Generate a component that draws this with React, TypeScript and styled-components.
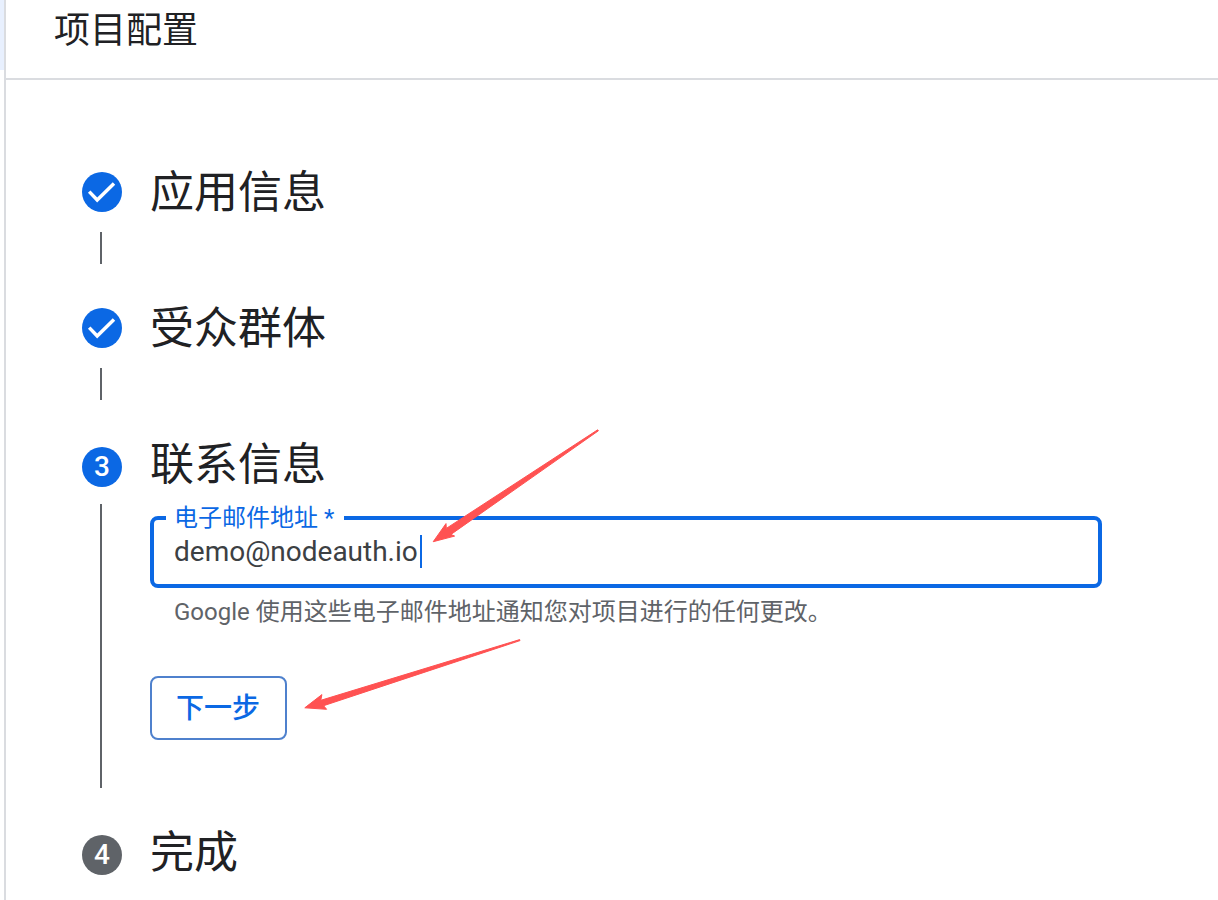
import React, { useState } from "react";
import styled, { createGlobalStyle } from "styled-components";

const GlobalStyle = createGlobalStyle`
  *, *::before, *::after { box-sizing: border-box; }
  body {
    margin: 0;
    background: #ffffff;
    color: #202124;
    font-family: Roboto, "Noto Sans CJK SC", sans-serif;
  }
`;

const Page = styled.div`
  display: flex;
  min-height: 100vh;
`;

const NavRail = styled.nav`
  flex: none;
  width: 6px;
  border-right: 2px solid #dadce0;
`;

const ActiveNavItem = styled.div`
  height: 70px;
  background: #e8f0fe;
`;

const Main = styled.main`
  flex: 1;
  min-width: 0;
`;

const Header = styled.header`
  display: flex;
  height: 80px;
  padding: 9px 48px 0;
  border-bottom: 2px solid #dadce0;
`;

const Title = styled.h1`
  margin: 0;
  font-size: 36px;
  line-height: 44px;
  font-weight: 400;
`;

const Stepper = styled.ol`
  margin: 0;
  padding: 92px 116px 0 76px;
  list-style: none;
`;

const Step = styled.li`
  display: grid;
  grid-template-columns: 40px minmax(0, 1fr);
  grid-template-rows: 40px auto;
  column-gap: 28px;
`;

const Marker = styled.span<{ $tone: "blue" | "grey"; $numbered?: boolean }>`
  display: flex;
  align-items: center;
  justify-content: center;
  width: 40px;
  height: 40px;
  margin-top: ${(p) => (p.$numbered ? "3px" : "0")};
  border-radius: 50%;
  background: ${(p) => (p.$tone === "blue" ? "#0b68e4" : "#5f6368")};
  color: #ffffff;
  font-size: 28px;
  line-height: 40px;
  font-weight: 500;
`;

const StepTitle = styled.h2`
  margin: 0;
  font-size: 44px;
  line-height: 42px;
  font-weight: 400;
`;

const Connector = styled.span`
  width: 2px;
  min-height: 32px;
  margin: 20px 0 44px 18px;
  background: #5f6368;
`;

const StepBody = styled.form`
  position: relative;
  padding: 22px 0 92px;
`;

const Field = styled.fieldset`
  position: relative;
  min-width: 0;
  margin: 0;
  padding: 0 20px 12px 12px;
  border: 4px solid #0b68e4;
  border-radius: 8px;
`;

const Legend = styled.legend`
  height: 24px;
  padding: 0 10px 0 8px;
  color: #0b68e4;
  font-size: 24px;
  line-height: 24px;
`;

const EmailInput = styled.input`
  display: block;
  width: 100%;
  height: 42px;
  padding: 0 8px;
  border: 0;
  outline: 0;
  background: transparent;
  color: #3c4043;
  caret-color: transparent;
  font-family: inherit;
  font-size: 28px;
  line-height: 36px;
`;

const Caret = styled.span`
  position: absolute;
  top: 5px;
  left: 266px;
  width: 2px;
  height: 33px;
  background: #0b68e4;
`;

const Hint = styled.p`
  margin: 8px 24px 0;
  color: #5f6368;
  font-size: 24px;
  line-height: 32px;
`;

const NextButton = styled.button`
  display: block;
  height: 64px;
  margin-top: 48px;
  padding: 2px 25px 0 24px;
  border: 2px solid #4f81cd;
  border-radius: 8px;
  background: #ffffff;
  color: #0b68e4;
  font-family: inherit;
  font-size: 28px;
  line-height: 36px;
  font-weight: 500;
`;

const Arrow = styled.svg<{ $top: number; $left: number }>`
  position: absolute;
  top: ${(p) => p.$top}px;
  left: ${(p) => p.$left}px;
  fill: #ff5252;
  stroke: #ff5252;
  stroke-linejoin: round;
  pointer-events: none;
`;

function Check() {
  return (
    <svg width="40" height="40" viewBox="0 0 40 40" aria-hidden="true">
      <path d="M7.2 19.6 L15.2 27.9 L32 11.4" fill="none" stroke="#ffffff" strokeWidth="3.5" />
    </svg>
  );
}

export default function App() {
  const [email, setEmail] = useState("demo@nodeauth.io");

  return (
    <Page>
      <GlobalStyle />
      <NavRail>
        <ActiveNavItem />
      </NavRail>
      <Main>
        <Header>
          <Title>项目配置</Title>
        </Header>
        <Stepper>
          <Step>
            <Marker $tone="blue">
              <Check />
            </Marker>
            <StepTitle>应用信息</StepTitle>
            <Connector />
          </Step>
          <Step>
            <Marker $tone="blue">
              <Check />
            </Marker>
            <StepTitle>受众群体</StepTitle>
            <Connector />
          </Step>
          <Step>
            <Marker $tone="blue" $numbered>
              3
            </Marker>
            <StepTitle>联系信息</StepTitle>
            <Connector />
            <StepBody onSubmit={(e) => e.preventDefault()}>
              <Field>
                <Legend>
                  <label htmlFor="email">电子邮件地址 *</label>
                </Legend>
                <EmailInput
                  id="email"
                  type="text"
                  value={email}
                  onChange={(e) => setEmail(e.target.value)}
                  aria-describedby="email-hint"
                />
                <Caret />
              </Field>
              <Hint id="email-hint">Google 使用这些电子邮件地址通知您对项目进行的任何更改。</Hint>
              <NextButton type="submit">下一步</NextButton>
              <Arrow $top={-64} $left={270} width="184" height="132" viewBox="420 420 184 132" aria-hidden="true">
                <path d="M433.2 541.7 L446 523.6 L446.3 528.4 L597.7 429.8 L598.4 430.8 L451 534.4 L454.6 536.1 Z" />
              </Arrow>
              <Arrow $top={146} $left={150} width="230" height="90" viewBox="300 630 230 90" aria-hidden="true">
                <path d="M304.8 707.8 L321.9 694.6 L320.8 700.3 L519.7 639.6 L520 640.6 L323.6 705.7 L326.6 709.3 Z" />
              </Arrow>
            </StepBody>
          </Step>
          <Step>
            <Marker $tone="grey" $numbered>
              4
            </Marker>
            <StepTitle>完成</StepTitle>
          </Step>
        </Stepper>
      </Main>
    </Page>
  );
}
